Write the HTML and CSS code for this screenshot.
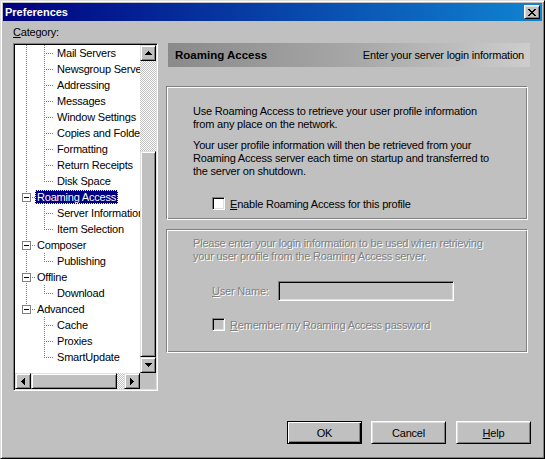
FILE: index.html
```html
<!DOCTYPE html>
<html>
<head>
<meta charset="utf-8">
<title>Preferences</title>
<link rel="stylesheet" href="styles.css">
</head>
<body>
<div class="window">
  <div class="titlebar">
    <span class="title">Preferences</span>
    <span class="close"><svg width="8" height="7" viewBox="0 0 8 7" shape-rendering="crispEdges"><path d="M0 0h2v1h1v1h2V1h1V0h2v1H7v1H6v1H5v1h1v1h1v1h1v1H6V6H5V5H3v1H2v1H0V6h1V5h1V4h1V3H2V2H1V1H0z" fill="#000"/></svg></span>
  </div>
  <div class="content">
    <div class="left">
      <div class="label"><u>C</u>ategory:</div>
      <div class="treebox">
        <div class="tree">
          <div class="row l2"><span class="txt">Mail Servers</span></div>
          <div class="row l2"><span class="txt">Newsgroup Servers</span></div>
          <div class="row l2"><span class="txt">Addressing</span></div>
          <div class="row l2"><span class="txt">Messages</span></div>
          <div class="row l2"><span class="txt">Window Settings</span></div>
          <div class="row l2"><span class="txt">Copies and Folders</span></div>
          <div class="row l2"><span class="txt">Formatting</span></div>
          <div class="row l2"><span class="txt">Return Receipts</span></div>
          <div class="row l2 last"><span class="txt">Disk Space</span></div>
          <div class="row l1 sel"><span class="exp"></span><span class="txt">Roaming Access</span></div>
          <div class="row l2"><span class="txt">Server Information</span></div>
          <div class="row l2 last"><span class="txt">Item Selection</span></div>
          <div class="row l1"><span class="exp"></span><span class="txt">Composer</span></div>
          <div class="row l2 last"><span class="txt">Publishing</span></div>
          <div class="row l1"><span class="exp"></span><span class="txt">Offline</span></div>
          <div class="row l2 last"><span class="txt">Download</span></div>
          <div class="row l1 end"><span class="exp"></span><span class="txt">Advanced</span></div>
          <div class="row l2 noroot"><span class="txt">Cache</span></div>
          <div class="row l2 noroot"><span class="txt">Proxies</span></div>
          <div class="row l2 last noroot"><span class="txt">SmartUpdate</span></div>
        </div>
        <div class="vscroll">
          <div class="sbtn"><svg width="7" height="4" viewBox="0 0 7 4" shape-rendering="crispEdges"><path d="M3 0h1v1h1v1h1v1h1v1H0V3h1V2h1V1h1z" fill="#000"/></svg></div>
          <div class="track"></div>
          <div class="sbtn vthumb"></div>
          <div class="sbtn"><svg width="7" height="4" viewBox="0 0 7 4" shape-rendering="crispEdges"><path d="M0 0h7v1H6v1H5v1H4v1H3V3H2V2H1V1H0z" fill="#000"/></svg></div>
        </div>
        <div class="hscroll">
          <div class="sbtn"><svg width="4" height="7" viewBox="0 0 4 7" shape-rendering="crispEdges"><path d="M3 0h1v7H3V6H2V5H1V4H0V3h1V2h1V1h1z" fill="#000"/></svg></div>
          <div class="sbtn hthumb"></div>
          <div class="track"></div>
          <div class="sbtn"><svg width="4" height="7" viewBox="0 0 4 7" shape-rendering="crispEdges"><path d="M0 0h1v1h1v1h1v1h1v1H3v1H2v1H1v1H0z" fill="#000"/></svg></div>
        </div>
        <div class="corner"></div>
      </div>
    </div>
    <div class="right">
      <div class="header">
        <span class="hd-title">Roaming Access</span>
        <span class="hd-sub">Enter your server login information</span>
      </div>
      <div class="group g1">
        <p>Use Roaming Access to retrieve your user profile information<br>from any place on the network.</p>
        <p class="p2">Your user profile information will then be retrieved from your<br>Roaming Access server each time on startup and transferred to<br>the server on shutdown.</p>
        <div class="check-row c1"><span class="cb"></span><span><u>E</u>nable Roaming Access for this profile</span></div>
      </div>
      <div class="group g2 disabled">
        <p>Please enter your login information to be used when retrieving<br>your user profile from the Roaming Access server.</p>
        <div class="user-row"><span class="ulabel"><u>U</u>ser Name:</span><span class="input"></span></div>
        <div class="check-row c2"><span class="cb dis"></span><span><u>R</u>emember my Roaming Access password</span></div>
      </div>
    </div>
  </div>
  <div class="buttons">
    <div class="btn default">OK</div>
    <div class="btn cancel">Cancel</div>
    <div class="btn help"><span><u>H</u>elp</span></div>
  </div>
</div>
</body>
</html>
```

FILE: styles.css
```css
body {
  margin: 0;
  background: #c0c0c0;
  font-family: "Liberation Sans", Arial, sans-serif;
  font-size: 11px;
  letter-spacing: -0.2px;
  color: #000;
}

.window {
  width: 545px;
  height: 459px;
  box-sizing: border-box;
  border: 1px solid;
  border-color: #dfdfdf #000 #000 #dfdfdf;
  box-shadow: inset 1px 1px #fff, inset -1px -1px #808080;
  padding: 2px;
  background: #c0c0c0;
}

.titlebar {
  height: 18px;
  display: flex;
  align-items: center;
  justify-content: space-between;
  padding: 0 2px;
  background: linear-gradient(to right, #000080, #1084d0);
}

.title {
  color: #fff;
  font-weight: bold;
  font-size: 11px;
  letter-spacing: 0;
}

.close {
  width: 16px;
  height: 14px;
  box-sizing: border-box;
  display: flex;
  align-items: center;
  justify-content: center;
  background: #c0c0c0;
  border: 1px solid;
  border-color: #fff #000 #000 #fff;
  box-shadow: inset 1px 1px #dfdfdf, inset -1px -1px #808080;
}

.content {
  display: flex;
  padding: 5px 0 0 10px;
}

.left {
  width: 145px;
}

.label {
  height: 17px;
  line-height: 13px;
}

.treebox {
  width: 145px;
  height: 348px;
  box-sizing: border-box;
  border: 1px solid;
  border-color: #808080 #fff #fff #808080;
  box-shadow: inset 1px 1px #000, inset -1px -1px #dfdfdf;
  padding: 1px;
  display: grid;
  grid-template-columns: 125px 16px;
  grid-template-rows: 328px 16px;
}

.tree {
  background: #fff;
  overflow: hidden;
}

.row {
  height: 16px;
  position: relative;
  display: flex;
  align-items: center;
  white-space: nowrap;
  background: repeating-linear-gradient(to bottom, #808080 0 1px, transparent 1px 2px) 11px 0 / 1px 16px no-repeat;
}

.row.end {
  background-size: 1px 9px;
}

.row.noroot {
  background: none;
}

.l1 {
  padding-left: 7px;
}

.l2 {
  padding-left: 40px;
}

.l2::after {
  content: "";
  position: absolute;
  left: 29px;
  top: 0;
  width: 10px;
  height: 16px;
  background:
    repeating-linear-gradient(to right, #808080 0 1px, transparent 1px 2px) 0 8px / 10px 1px no-repeat,
    repeating-linear-gradient(to bottom, #808080 0 1px, transparent 1px 2px) 0 0 / 1px 16px no-repeat;
}

.l2.last::after {
  background-size: 10px 1px, 1px 9px;
}

.exp {
  position: relative;
  align-self: flex-start;
  margin-top: 4px;
  width: 9px;
  height: 9px;
  box-sizing: border-box;
  border: 1px solid #808080;
  background: #fff;
  margin-right: 4px;
}

.exp::before {
  content: "";
  position: absolute;
  left: 1px;
  top: 3px;
  width: 5px;
  height: 1px;
  background: #000;
}

.exp::after {
  content: "";
  position: absolute;
  left: 9px;
  top: 3px;
  width: 3px;
  height: 1px;
  background: repeating-linear-gradient(to right, #808080 0 1px, transparent 1px 2px);
}

.txt {
  display: block;
  line-height: 12px;
  height: 12px;
  padding: 0 1px;
  border: 1px solid transparent;
}

.sel .txt {
  background: #000080;
  color: #fff;
  border: 1px dotted #ffff80;
}

.vscroll {
  display: flex;
  flex-direction: column;
}

.hscroll {
  display: flex;
}

.sbtn {
  width: 16px;
  height: 16px;
  flex: none;
  box-sizing: border-box;
  background: #c0c0c0;
  border: 1px solid;
  border-color: #dfdfdf #000 #000 #dfdfdf;
  box-shadow: inset 1px 1px #fff, inset -1px -1px #808080;
  display: flex;
  align-items: center;
  justify-content: center;
}

.sbtn svg {
  display: block;
}

.vthumb {
  height: 206px;
}

.hthumb {
  width: 86px;
}

.track {
  flex: 1;
  background: repeating-conic-gradient(#c0c0c0 0 25%, #fff 0 50%) 0 0 / 2px 2px;
}

.corner {
  background: #c0c0c0;
}

.right {
  margin-left: 8px;
  width: 362px;
  padding-top: 17px;
}

.header {
  margin-left: 2px;
  width: 362px;
  height: 24px;
  box-sizing: border-box;
  display: flex;
  align-items: center;
  justify-content: space-between;
  padding: 0 6px 0 7px;
  background: linear-gradient(to right, #8a8a8a 0%, #a6a6a6 50%, #cdcdcd 100%);
}

.hd-title {
  font-weight: bold;
  font-size: 11.5px;
  letter-spacing: 0;
}

.group {
  box-sizing: border-box;
  border: 1px solid;
  border-color: #808080 #fff #fff #808080;
  box-shadow: inset 1px 1px #fff, inset -1px -1px #808080;
}

.g1 {
  margin-top: 19px;
  height: 134px;
  padding: 18px 0 0 26px;
}

.g2 {
  margin-top: 9px;
  height: 124px;
  padding: 7px 0 0 26px;
}

p {
  margin: 0;
  line-height: 13px;
}

.p2 {
  margin-top: 8px;
}

.check-row {
  display: flex;
  align-items: center;
  height: 13px;
  padding-left: 19px;
}

.c1 {
  margin-top: 19px;
}

.c2 {
  margin-top: 17px;
}

.cb {
  width: 13px;
  height: 13px;
  box-sizing: border-box;
  border: 1px solid;
  border-color: #808080 #fff #fff #808080;
  box-shadow: inset 1px 1px #000, inset -1px -1px #dfdfdf;
  background: #fff;
  margin-right: 5px;
}

.cb.dis {
  background: #c0c0c0;
}

.disabled p,
.disabled .ulabel,
.disabled .check-row span:last-child {
  color: #808080;
  text-shadow: 1px 1px #fff;
}

.user-row {
  display: flex;
  align-items: center;
  margin-top: 18px;
  height: 20px;
  padding-left: 19px;
}

.ulabel {
  width: 66px;
}

.input {
  width: 176px;
  height: 20px;
  box-sizing: border-box;
  border: 1px solid;
  border-color: #808080 #fff #fff #808080;
  box-shadow: inset 1px 1px #000, inset -1px -1px #dfdfdf;
  background: #c0c0c0;
}

.buttons {
  display: flex;
  margin-top: 30px;
  padding-left: 284px;
}

.btn {
  width: 75px;
  height: 23px;
  box-sizing: border-box;
  display: flex;
  align-items: center;
  justify-content: center;
  border: 1px solid;
  border-color: #fff #000 #000 #fff;
  box-shadow: inset 1px 1px #dfdfdf, inset -1px -1px #808080;
}

.btn.default {
  border-color: #000;
  box-shadow: inset 1px 1px #fff, inset -1px -1px #000, inset -2px -2px #808080;
}

.cancel {
  margin-left: 9px;
}

.help {
  margin-left: 10px;
}
```
